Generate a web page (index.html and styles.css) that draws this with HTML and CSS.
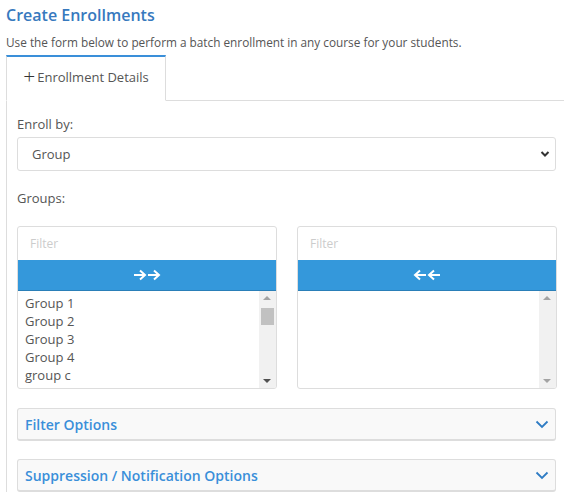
FILE: index.html
```html
<!DOCTYPE html>
<html>
<head>
<meta charset="utf-8">
<link rel="stylesheet" href="styles.css">
</head>
<body>
<div class="page">
  <h1 class="title">Create Enrollments</h1>
  <p class="subtitle">Use the form below to perform a batch enrollment in any course for your students.</p>
  <div class="tabs">
    <div class="tab"><span class="plus">+</span> Enrollment Details</div>
  </div>
  <div class="panel">
    <div class="label">Enroll by:</div>
    <div class="select">
      <span>Group</span>
      <svg class="sel-chev" width="10" height="8" viewBox="0 0 10 8"><path d="M1.5 2 L5 5.5 L8.5 2" fill="none" stroke="#333" stroke-width="2"/></svg>
    </div>
    <div class="label groups-label">Groups:</div>
    <div class="duallist">
      <div class="box">
        <div class="filter">Filter</div>
        <div class="movebar">
          <svg width="28" height="12" viewBox="0 0 28 12"><g fill="none" stroke="#fff" stroke-width="2"><path d="M1 6 H12 M7 1.5 L12 6 L7 10.5"/><path d="M15 6 H26 M21 1.5 L26 6 L21 10.5"/></g></svg>
        </div>
        <div class="list">
          <div class="items">
            <div>Group 1</div>
            <div>Group 2</div>
            <div>Group 3</div>
            <div>Group 4</div>
            <div>group c</div>
          </div>
          <div class="scroll">
            <span class="arr up"></span>
            <span class="thumb"></span>
            <span class="arr down"></span>
          </div>
        </div>
      </div>
      <div class="box">
        <div class="filter">Filter</div>
        <div class="movebar">
          <svg width="28" height="12" viewBox="0 0 28 12"><g fill="none" stroke="#fff" stroke-width="2"><path d="M27 6 H16 M21 1.5 L16 6 L21 10.5"/><path d="M13 6 H2 M7 1.5 L2 6 L7 10.5"/></g></svg>
        </div>
        <div class="list">
          <div class="items"></div>
          <div class="scroll">
            <span class="arr up light"></span>
            <span class="arr down light"></span>
          </div>
        </div>
      </div>
    </div>
    <div class="collapse">
      <span>Filter Options</span>
      <svg width="14" height="9" viewBox="0 0 14 9"><path d="M1.5 1.5 L7 7 L12.5 1.5" fill="none" stroke="#2f7cc4" stroke-width="1.8"/></svg>
    </div>
    <div class="collapse">
      <span>Suppression / Notification Options</span>
      <svg width="14" height="9" viewBox="0 0 14 9"><path d="M1.5 1.5 L7 7 L12.5 1.5" fill="none" stroke="#2f7cc4" stroke-width="1.8"/></svg>
    </div>
  </div>
</div>
</body>
</html>
```
FILE: styles.css
```css
html, body {
  margin: 0;
  padding: 0;
  overflow: hidden;
  background: #fff;
}
body {
  font-family: "Open Sans", "Noto Sans", sans-serif;
  color: #555;
  width: 564px;
  height: 502px;
}
.page {
  padding: 4px 0 0 6px;
  width: 558px;
  height: 498px;
  overflow: hidden;
}
.title {
  margin: 0;
  font-size: 16px;
  line-height: 22px;
  font-weight: 600;
  color: #3779be;
}
.subtitle {
  margin: 8px 0 0;
  font-size: 11.8px;
  line-height: 16px;
  color: #555;
  white-space: nowrap;
}
.tabs {
  margin-top: 5px;
  display: flex;
  position: relative;
  z-index: 1;
  margin-bottom: -1px;
}
.tab {
  border-top: 2px solid #3a8fd9;
  border-left: 1px solid #ddd;
  border-right: 1px solid #ddd;
  border-bottom: 1px solid #fff;
  background: #fff;
  display: flex;
  align-items: center;
  justify-content: center;
  padding-bottom: 3px;
  box-sizing: border-box;
  height: 46px;
  width: 160px;
  font-size: 13px;
  color: #555;
}
.plus {
  font-size: 21px;
  font-weight: 300;
  color: #333;
  margin-right: 2px;
  line-height: 1;
  position: relative;
  top: -1px;
}
.panel {
  border-top: 1px solid #ddd;
  border-left: 1px solid #ddd;
  padding: 14px 0 0 10px;
  width: 560px;
}
.label {
  font-size: 13px;
  line-height: 18px;
  color: #555;
}
.select {
  margin-top: 4px;
  height: 32px;
  border: 1px solid #ddd;
  border-radius: 3px;
  display: flex;
  align-items: center;
  justify-content: space-between;
  padding: 0 0 0 14px;
  box-sizing: content-box;
  width: 523px;
  font-size: 13px;
  color: #555;
}
.sel-chev {
  margin-right: 5px;
}
.groups-label {
  margin-top: 18px;
}
.duallist {
  margin-top: 19px;
  display: grid;
  grid-template-columns: 260px 260px;
  column-gap: 20px;
}
.box {
  border: 1px solid #ddd;
  border-radius: 3px;
  height: 161px;
  display: flex;
  flex-direction: column;
  overflow: hidden;
}
.filter {
  height: 33px;
  flex: none;
  display: flex;
  align-items: center;
  padding-left: 12px;
  font-size: 12px;
  color: #ccc;
}
.movebar {
  height: 30px;
  flex: none;
  background: #3498db;
  border-bottom: 1px solid #2a7fb8;
  display: flex;
  align-items: center;
  justify-content: center;
}
.list {
  flex: 1;
  display: flex;
}
.items {
  flex: 1;
  padding: 3px 0 0 7px;
  font-size: 13px;
  line-height: 18px;
  color: #555;
}
.scroll {
  width: 17px;
  background: #f1f1f1;
  position: relative;
}
.arr {
  position: absolute;
  left: 4px;
  width: 0;
  height: 0;
  border-left: 4px solid transparent;
  border-right: 4px solid transparent;
}
.arr.up {
  top: 5px;
  border-bottom: 4px solid #a3a3a3;
}
.arr.down {
  bottom: 5px;
  border-top: 4px solid #505050;
}
.arr.up.light {
  border-bottom-color: #a3a3a3;
}
.arr.down.light {
  border-top-color: #a3a3a3;
}
.thumb {
  position: absolute;
  left: 2px;
  top: 17px;
  width: 13px;
  height: 17px;
  background: #c1c1c1;
}
.collapse {
  margin-top: 19px;
  height: 30px;
  border: 1px solid #ddd;
  border-bottom: 2px solid #ddd;
  border-radius: 3px;
  background: #f9f9f9;
  display: flex;
  align-items: center;
  justify-content: space-between;
  padding: 0 6px 0 7px;
  box-sizing: content-box;
  width: 524px;
  font-size: 14px;
  font-weight: 600;
  color: #3a8fd9;
}
.collapse + .collapse {
  margin-top: 18px;
}
```
